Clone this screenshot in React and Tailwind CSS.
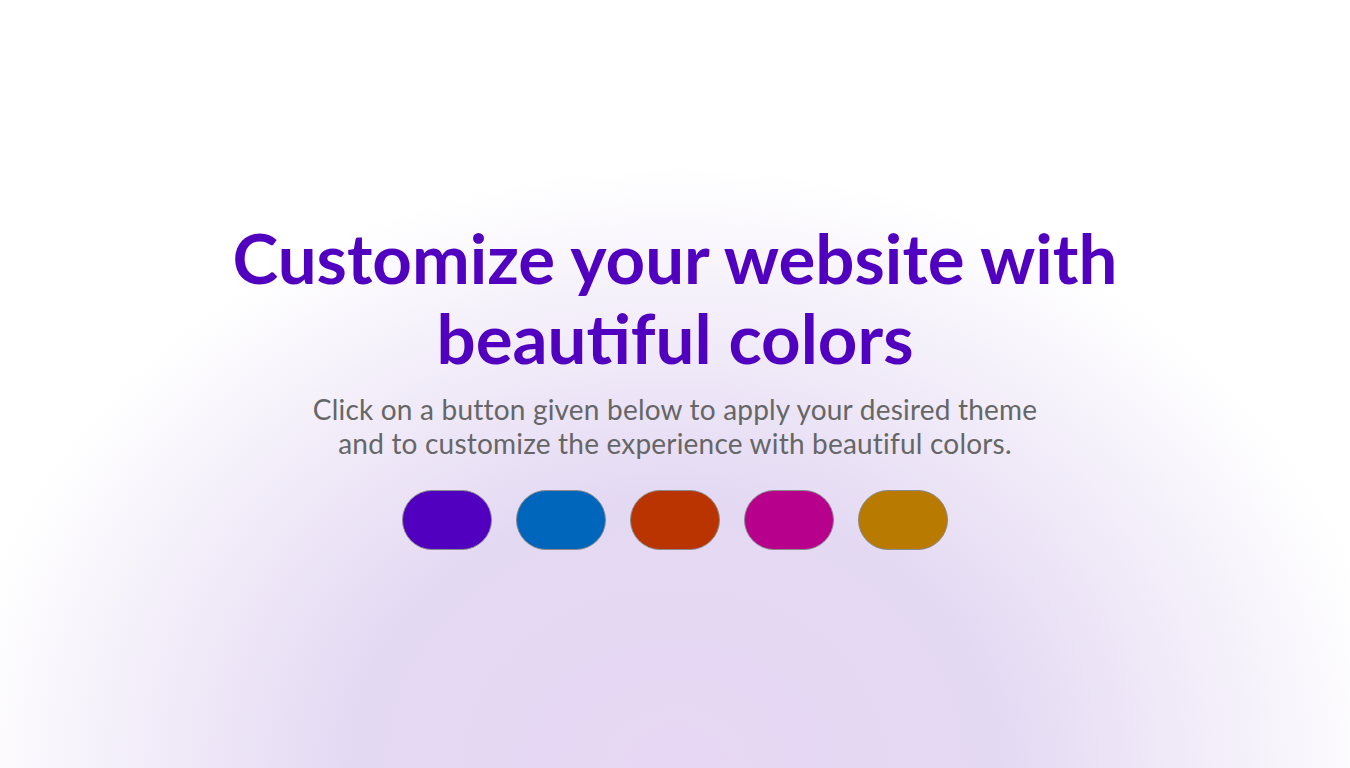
const themes = [
  { name: "purple", color: "bg-[#5000be]" },
  { name: "blue", color: "bg-[#0066bb]" },
  { name: "orange", color: "bg-[#b93400]" },
  { name: "pink", color: "bg-[#b7008b]" },
  { name: "gold", color: "bg-[#b87a00]" },
];

export default function App() {
  return (
    <div className="min-h-screen w-full flex items-center justify-center bg-white bg-[radial-gradient(ellipse_720px_600px_at_50%_100%,#e7d7f4_0%,#e4d9f3_45%,#ffffff_100%)] font-['Lato',sans-serif]">
      <div className="flex flex-col items-center text-center">
        <h1 className="text-[69px] leading-[80px] font-bold text-[#5000be] max-w-[960px]">
          Customize your website with beautiful colors
        </h1>
        <p className="mt-[14px] text-[28px] leading-[34px] font-normal tracking-[0.2px] text-[#666666] max-w-[750px]">
          Click on a button given below to apply your desired theme and to customize the experience with beautiful colors.
        </p>
        <div className="mt-[30px] flex gap-6">
          {themes.map((t) => (
            <button
              key={t.name}
              aria-label={t.name}
              className={`${t.color} w-[90px] h-[60px] rounded-full border border-[#8a8a8a] cursor-pointer`}
            />
          ))}
        </div>
      </div>
    </div>
  );
}
